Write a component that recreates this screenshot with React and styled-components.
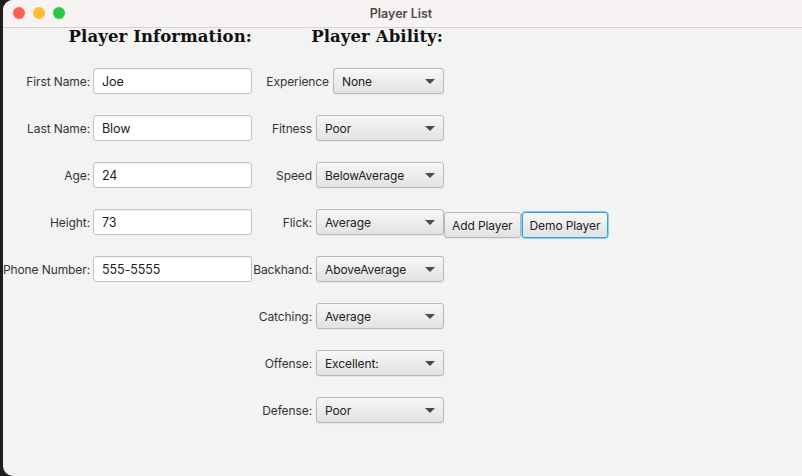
import React from 'react';
import styled, { createGlobalStyle } from 'styled-components';

const Global = createGlobalStyle`
  html, body {
    margin: 0;
    padding: 0;
    width: 802px;
    height: 476px;
    overflow: hidden;
    background: #1e1e1e;
  }
  #root {
    height: 100%;
  }
`;

const Window = styled.div`
  display: flex;
  flex-direction: column;
  height: 476px;
  margin-left: 3px;
  background: #f3f3f3;
  border-radius: 10px 0 0 10px;
  overflow: hidden;
  font-family: Inter, "Open Sans", sans-serif;
`;

const TitleBar = styled.div`
  position: relative;
  height: 27px;
  flex: none;
  display: flex;
  align-items: center;
  justify-content: center;
  background: #f8f3f3;
  border-bottom: 1px solid #d4d2d2;
  .title {
    font-size: 12.5px;
    font-weight: 600;
    color: #4c4848;
    margin-left: -3px;
  }
`;

const Lights = styled.div`
  position: absolute;
  left: 10px;
  top: 7px;
  display: flex;
  gap: 8px;
`;

const Light = styled.span`
  width: 12px;
  height: 12px;
  border-radius: 50%;
  background: ${(p) => p.color};
`;

const Form = styled.div`
  display: grid;
  grid-template-columns: 87px 162px 192px auto;
  grid-template-rows: 19px repeat(8, 26px);
  row-gap: 21px;
`;

const Heading = styled.h2`
  margin: 0;
  justify-self: end;
  align-self: end;
  grid-column: ${(p) => p.col};
  margin-right: ${(p) => p.mr || 0}px;
  font-family: "DejaVu Serif", Georgia, serif;
  font-weight: bold;
  font-size: 16.5px;
  line-height: 20px;
  color: #111;
  letter-spacing: 0.1px;
`;

const Label = styled.label`
  grid-column: 1;
  justify-self: end;
  align-self: center;
  font-size: 12px;
  letter-spacing: -0.1px;
  color: #333;
  white-space: nowrap;
`;

const Field = styled.input`
  grid-column: 2;
  margin-left: 3px;
  width: 159px;
  height: 26px;
  box-sizing: border-box;
  border: 1px solid #c3c3c3;
  border-radius: 3px;
  background: #fff;
  box-shadow: inset 0 1px 2px rgba(0, 0, 0, 0.06);
  padding: 0 8px;
  font-family: inherit;
  font-size: 12.5px;
  letter-spacing: -0.1px;
  color: #222;
  outline: none;
`;

const AbilityRow = styled.div`
  grid-column: 3;
  grid-row: ${(p) => p.row};
  display: flex;
  align-items: center;
  justify-content: flex-end;
  gap: 4px;
  margin-left: 1px;
  label {
    font-size: 12px;
    letter-spacing: -0.1px;
    color: #333;
    white-space: nowrap;
  }
`;

const Combo = styled.div`
  width: ${(p) => p.w}px;
  height: 26px;
  flex: none;
  box-sizing: border-box;
  display: flex;
  align-items: center;
  justify-content: space-between;
  padding: 0 8px 0 8px;
  border: 1px solid #b9b9b9;
  border-radius: 3px;
  background: linear-gradient(#f7f7f7, #e2e2e2);
  box-shadow: 0 1px 1px rgba(0, 0, 0, 0.06);
  font-size: 12px;
  letter-spacing: -0.1px;
  color: #222;
  &::after {
    content: '';
    border-left: 5px solid transparent;
    border-right: 5px solid transparent;
    border-top: 5px solid #4a4a4a;
  }
`;

const Buttons = styled.div`
  grid-column: 4;
  grid-row: 5;
  display: flex;
  gap: 1px;
  margin-top: 3px;
`;

const Button = styled.button`
  height: 26px;
  box-sizing: border-box;
  padding: 0 7px;
  font-family: inherit;
  font-size: 12px;
  letter-spacing: -0.1px;
  color: #222;
  border-radius: 3px;
  border: 1px solid ${(p) => (p.focused ? '#2ba6dc' : '#b7b7b7')};
  box-shadow: ${(p) => (p.focused ? '0 0 0 0.5px #2ba6dc' : '0 1px 1px rgba(0,0,0,0.06)')};
  background: linear-gradient(#f7f7f7, #e2e2e2);
`;

const info = [
  ['First Name:', 'Joe'],
  ['Last Name:', 'Blow'],
  ['Age:', '24'],
  ['Height:', '73'],
  ['Phone Number:', '555-5555'],
];

const ability = [
  ['Experience', 'None', 111],
  ['Fitness', 'Poor', 128],
  ['Speed', 'BelowAverage', 128],
  ['Flick:', 'Average', 128],
  ['Backhand:', 'AboveAverage', 128],
  ['Catching:', 'Average', 128],
  ['Offense:', 'Excellent:', 128],
  ['Defense:', 'Poor', 128],
];

export default function App() {
  return (
    <>
      <Global />
      <Window>
        <TitleBar>
          <Lights>
            <Light color="#fe5f57" />
            <Light color="#febc2e" />
            <Light color="#28c840" />
          </Lights>
          <span className="title">Player List</span>
        </TitleBar>
        <Form>
          <Heading col="1 / 3">Player Information:</Heading>
          <Heading col="3" mr={1}>Player Ability:</Heading>
          {info.map(([label, value], i) => (
            <React.Fragment key={label}>
              <Label style={{ gridRow: i + 2 }}>{label}</Label>
              <Field style={{ gridRow: i + 2 }} defaultValue={value} />
            </React.Fragment>
          ))}
          {ability.map(([label, value, w], i) => (
            <AbilityRow key={label} row={i + 2}>
              <label>{label}</label>
              <Combo w={w}>{value}</Combo>
            </AbilityRow>
          ))}
          <Buttons>
            <Button>Add Player</Button>
            <Button focused>Demo Player</Button>
          </Buttons>
        </Form>
      </Window>
    </>
  );
}
